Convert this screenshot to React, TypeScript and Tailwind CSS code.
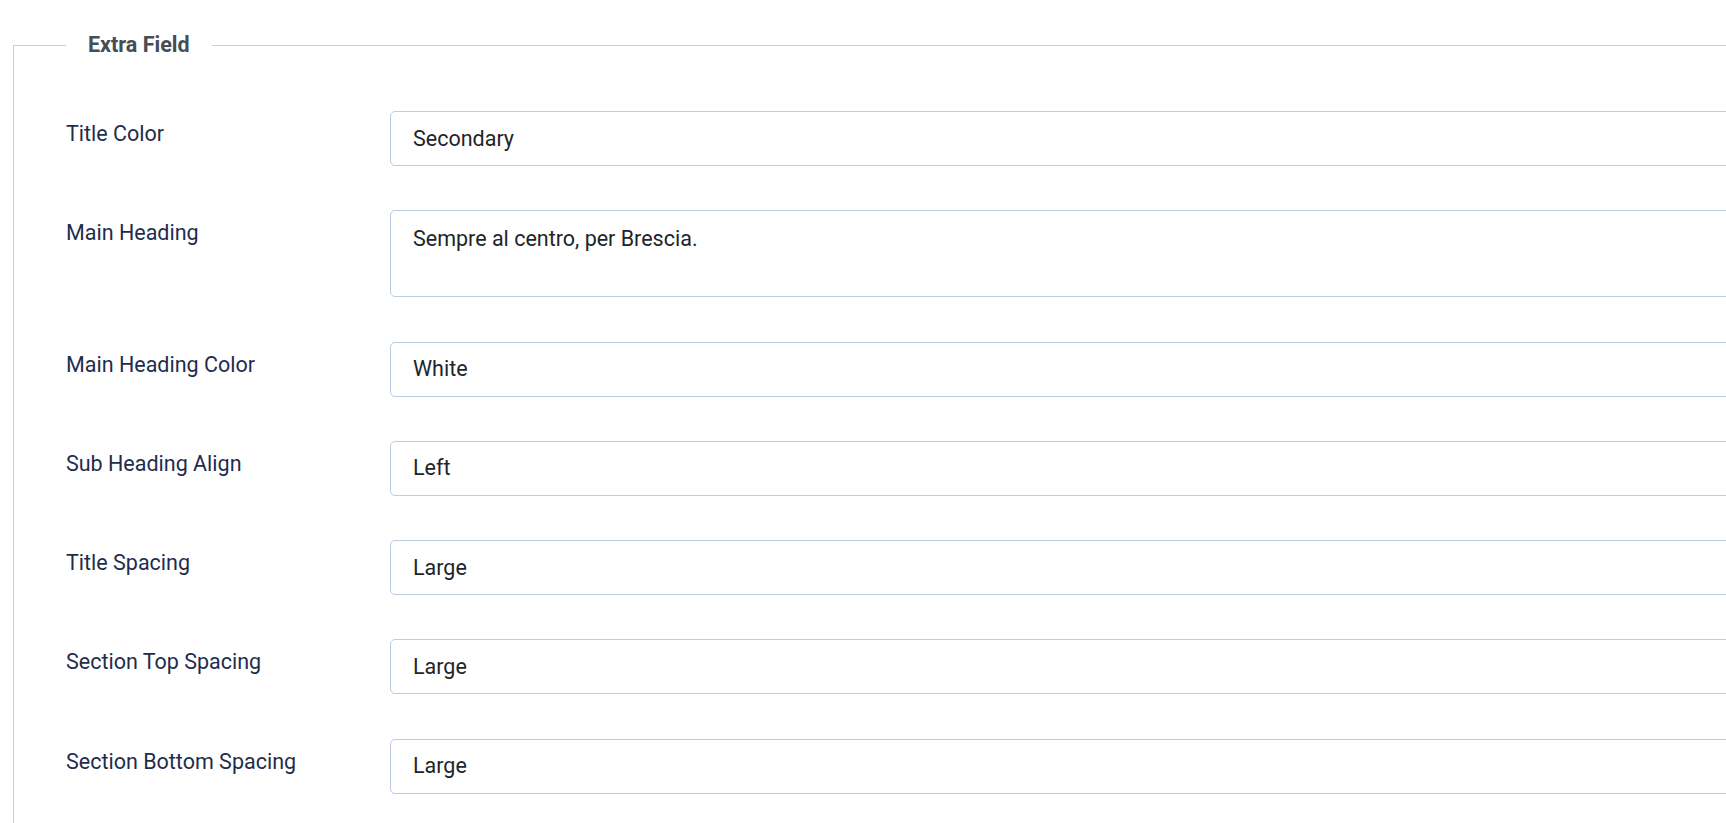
import React from 'react';

interface FieldRow {
  label: string;
  value: string;
  multiline?: boolean;
}

const rows: FieldRow[] = [
  { label: 'Title Color', value: 'Secondary' },
  { label: 'Main Heading', value: 'Sempre al centro, per Brescia.', multiline: true },
  { label: 'Main Heading Color', value: 'White' },
  { label: 'Sub Heading Align', value: 'Left' },
  { label: 'Title Spacing', value: 'Large' },
  { label: 'Section Top Spacing', value: 'Large' },
  { label: 'Section Bottom Spacing', value: 'Large' },
];

const App: React.FC = () => {
  return (
    // page is wider than the window, inputs run off the right edge
    <div className="w-full h-[823px] overflow-hidden bg-white font-['Roboto',sans-serif]">
      <div className="w-[1900px] pt-[30px] pl-[13px]">
        <fieldset className="border border-[#c5d0e3] px-[52px] pb-10">
          <legend className="px-[22px] text-[21.5px] font-bold leading-[30px] text-[#454d57]">
            Extra Field
          </legend>
          {/* label / control grid */}
          <div className="grid grid-cols-[324px_1fr] gap-y-[44.25px] pt-[51px]">
            {rows.map((row) => (
              <React.Fragment key={row.label}>
                <label className="pt-[7px] text-[21.5px] leading-[32px] text-[#1f2d4d]">
                  {row.label}
                </label>
                {row.multiline ? (
                  <div className="h-[87px] rounded-[5px] border border-[#bccbe3] bg-white px-[22px] pt-[12px] text-[21.5px] leading-[32px] text-[#212529]">
                    {row.value}
                  </div>
                ) : (
                  <div className="flex h-[55px] items-center rounded-[5px] border border-[#bccbe3] bg-white px-[22px] text-[21.5px] leading-[32px] text-[#212529]">
                    {row.value}
                  </div>
                )}
              </React.Fragment>
            ))}
          </div>
        </fieldset>
      </div>
    </div>
  );
};

export default App;
